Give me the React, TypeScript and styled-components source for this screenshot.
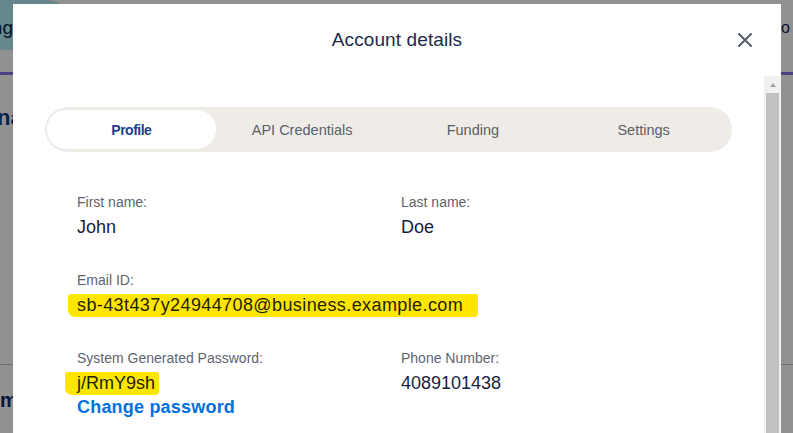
import React from "react";
import styled, { createGlobalStyle } from "styled-components";

const GlobalStyle = createGlobalStyle`
  html, body { margin: 0; padding: 0; background: #ffffff; overflow: hidden; }
  body { font-family: "Liberation Sans", Arial, Helvetica, sans-serif; }
  * { box-sizing: border-box; }
`;

/* ---------- background page (dimmed behind the dialog) ---------- */
const Page = styled.div`
  width: 793px;
  height: 433px;
  display: flex;
  flex-direction: column;
  background: #ffffff;
  overflow: hidden;
`;

const TopNav = styled.header`
  height: 75px;
  flex: none;
  display: flex;
  justify-content: space-between;
  align-items: flex-start;
  border-bottom: 3px solid #8770e6;
`;

const NavTab = styled.div`
  width: 70px;
  height: 50px;
  display: flex;
  align-items: center;
  justify-content: flex-end;
  overflow: hidden;
  padding: 6px 57px 0 0;
  background: #b4eef4;
  border-radius: 0 22px 22px 0;
  font-size: 19px;
  color: #0b2150;
  white-space: nowrap;
`;

const NavLink = styled.div`
  width: 12px;
  overflow: hidden;
  padding-top: 19px;
  font-size: 16px;
  color: #0b2150;
  white-space: nowrap;
`;

const Section = styled.section`
  height: 290px;
  flex: none;
  padding-top: 30px;
  border-bottom: 1px solid #c2c2c2;
`;

const PageHeading = styled.h1`
  margin: 0 0 0 -3px;
  font-size: 22px;
  line-height: 26px;
  font-weight: 700;
  color: #0a3c8c;
  white-space: nowrap;
`;

const PageItem = styled.div`
  padding-top: 23px;
  font-size: 20px;
  line-height: 24px;
  font-weight: 700;
  color: #0a2a6a;
`;

/* ---------- dialog ---------- */
const Overlay = styled.div`
  position: fixed;
  inset: 0;
  background: rgba(0, 0, 0, 0.43);
  padding: 4px 0 0 13px;
  overflow: hidden;
`;

const Modal = styled.div`
  width: 768px;
  height: 560px;
  background: #ffffff;
  display: flex;
  flex-direction: column;
`;

const ModalHeader = styled.div`
  height: 72px;
  flex: none;
  display: grid;
  grid-template-columns: 1fr auto 1fr;
  align-items: center;
  padding: 0 24px;
`;

const Title = styled.h2`
  grid-column: 2;
  margin: 0;
  font-size: 19px;
  font-weight: 400;
  letter-spacing: 0.1px;
  color: #1b2a4d;
`;

const CloseButton = styled.button`
  grid-column: 3;
  justify-self: end;
  width: 24px;
  height: 24px;
  padding: 0;
  border: none;
  background: transparent;
  display: flex;
  align-items: center;
  justify-content: center;
  cursor: pointer;
`;

const ModalBody = styled.div`
  flex: 1;
  display: flex;
  min-height: 0;
`;

const BodyContent = styled.div`
  flex: 1;
  padding: 31px 32px 0 32px;
`;

const TabBar = styled.div`
  height: 45px;
  padding: 3px 2px;
  border-radius: 23px;
  background: #efece8;
  display: grid;
  grid-template-columns: repeat(4, 1fr);
`;

const Tab = styled.button<{ $active?: boolean }>`
  border: none;
  margin: 0 2px 0 0;
  padding: 0;
  border-radius: 20px;
  background: ${(p) => (p.$active ? "#ffffff" : "transparent")};
  font-family: inherit;
  font-size: ${(p) => (p.$active ? "14px" : "14.5px")};
  font-weight: ${(p) => (p.$active ? 700 : 400)};
  letter-spacing: ${(p) => (p.$active ? "-0.5px" : "0")};
  color: ${(p) => (p.$active ? "#1d3f8e" : "#5b6068")};
  cursor: pointer;
`;

const Fields = styled.div`
  margin-top: 40px;
  padding-left: 32px;
  display: grid;
  grid-template-columns: 324px 1fr;
  row-gap: 30px;
`;

const Field = styled.div`
  display: flex;
  flex-direction: column;
  align-items: flex-start;
`;

const Label = styled.div`
  font-size: 14px;
  line-height: 20px;
  color: #5e646e;
`;

const Value = styled.div`
  margin-top: 2px;
  font-size: 18px;
  line-height: 26px;
  color: #152341;
  white-space: nowrap;
`;

const Marker = styled.span<{ $left: number; $right: number; $spacing?: number }>`
  background: #ffe600;
  color: #1f2300;
  padding: 1px ${(p) => p.$right}px 2px ${(p) => p.$left}px;
  margin-left: -${(p) => p.$left}px;
  border-radius: 3px 2px 4px 7px;
  letter-spacing: ${(p) => p.$spacing ?? 0}px;
`;

const ActionLink = styled.a`
  margin-top: -1px;
  font-size: 18px;
  line-height: 24px;
  font-weight: 700;
  letter-spacing: 0.2px;
  color: #0070e0;
  text-decoration: none;
  cursor: pointer;
`;

const Scrollbar = styled.div`
  width: 17px;
  flex: none;
  background: #f1f1f1;
  display: flex;
  flex-direction: column;
  align-items: center;
`;

const ScrollArrow = styled.div`
  height: 17px;
  flex: none;
  display: flex;
  align-items: center;
  justify-content: center;
  &::before {
    content: "";
    border-left: 3.5px solid transparent;
    border-right: 3.5px solid transparent;
    border-bottom: 4px solid #a3a3a3;
  }
`;

const ScrollThumb = styled.div`
  width: 13px;
  height: 380px;
  background: #c1c1c1;
`;

const tabs = ["Profile", "API Credentials", "Funding", "Settings"];

export default function App() {
  return (
    <>
      <GlobalStyle />
      <Page>
        <TopNav>
          <NavTab>ng</NavTab>
          <NavLink>o</NavLink>
        </TopNav>
        <Section>
          <PageHeading>na</PageHeading>
        </Section>
        <PageItem>m</PageItem>
      </Page>
      <Overlay>
        <Modal role="dialog" aria-label="Account details">
          <ModalHeader>
            <Title>Account details</Title>
            <CloseButton aria-label="Close">
              <svg width="14" height="14" viewBox="0 0 14 14">
                <path d="M1 1 L13 13 M13 1 L1 13" stroke="#545d68" strokeWidth="2" strokeLinecap="round" />
              </svg>
            </CloseButton>
          </ModalHeader>
          <ModalBody>
            <BodyContent>
              <TabBar>
                {tabs.map((t, i) => (
                  <Tab key={t} $active={i === 0}>
                    {t}
                  </Tab>
                ))}
              </TabBar>
              <Fields>
                <Field>
                  <Label>First name:</Label>
                  <Value>John</Value>
                </Field>
                <Field>
                  <Label>Last name:</Label>
                  <Value>Doe</Value>
                </Field>
                <Field>
                  <Label>Email ID:</Label>
                  <Value>
                    <Marker $left={9} $right={15} $spacing={0.4}>
                      sb-43t437y24944708@business.example.com
                    </Marker>
                  </Value>
                </Field>
                <Field />
                <Field>
                  <Label>System Generated Password:</Label>
                  <Value>
                    <Marker $left={12} $right={4}>j/RmY9sh</Marker>
                  </Value>
                  <ActionLink>Change password</ActionLink>
                </Field>
                <Field>
                  <Label>Phone Number:</Label>
                  <Value>4089101438</Value>
                </Field>
              </Fields>
            </BodyContent>
            <Scrollbar>
              <ScrollArrow />
              <ScrollThumb />
            </Scrollbar>
          </ModalBody>
        </Modal>
      </Overlay>
    </>
  );
}
